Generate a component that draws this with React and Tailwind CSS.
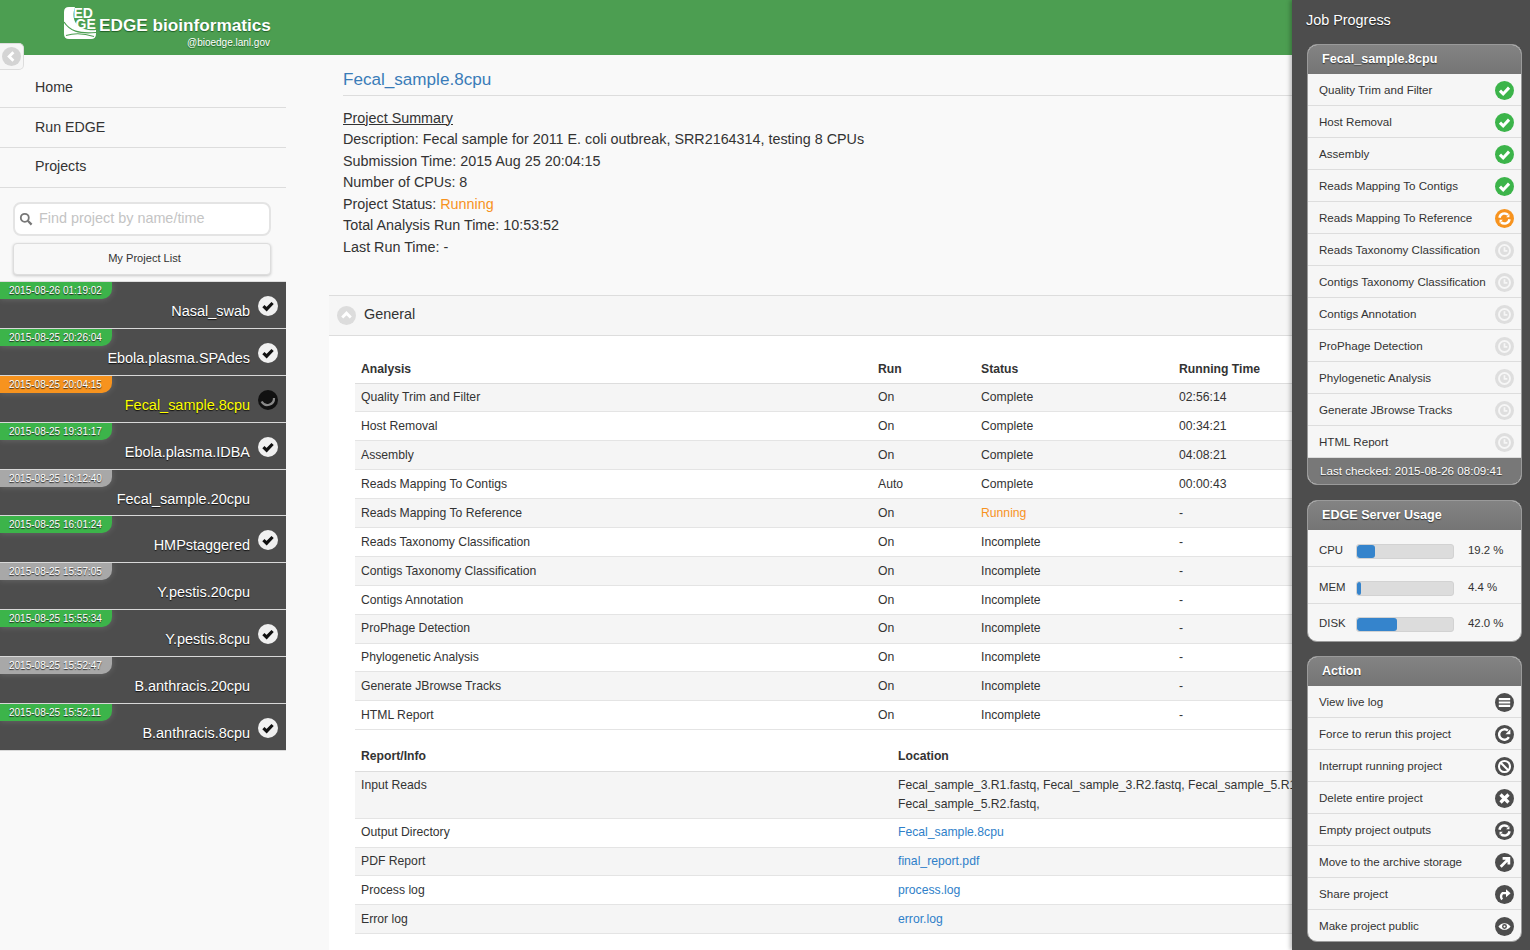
import React from "react";

const F = "[font-family:'Liberation_Sans',Arial,sans-serif]";

const G = {
  check: <path d="M5.2 10.2 8.6 13.6 14.8 7" fill="none" stroke="#fff" strokeWidth="3.2" />,
  refresh: (
    <g fill="none" stroke="#fff" strokeWidth="2.6">
      <path d="M4.7 9.2A5.4 5.4 0 0 1 13.8 6.2" />
      <path d="M15.3 10.8A5.4 5.4 0 0 1 6.2 13.8" />
      <path d="M15.2 5.2V8.6H11.8Z" fill="#fff" strokeWidth="0" />
      <path d="M4.8 14.8V11.4H8.2Z" fill="#fff" strokeWidth="0" />
    </g>
  ),
  clock: (
    <g fill="none" stroke="#f6f6f6" strokeWidth="2">
      <circle cx="10" cy="10" r="5.8" />
      <path d="M10 6.5V10.4H13" strokeWidth="1.8" />
    </g>
  ),
  bars: <path d="M4 6.4H16M4 10H16M4 13.6H16" fill="none" stroke="#fff" strokeWidth="2.3" />,
  rerun: (
    <g fill="none" stroke="#fff" strokeWidth="2.5">
      <path d="M14.6 12.8A5.5 5.5 0 1 1 13.6 6" />
      <path d="M16.2 4.6V9.8H11Z" fill="#fff" strokeWidth="0" />
    </g>
  ),
  forbid: (
    <g fill="none" stroke="#fff" strokeWidth="2.2">
      <circle cx="10" cy="10" r="5.8" />
      <path d="M6 6 14 14" />
    </g>
  ),
  close: <path d="M5.8 5.8 14.2 14.2M14.2 5.8 5.8 14.2" fill="none" stroke="#fff" strokeWidth="3.4" />,
  up: <path d="M6 14.5 13.5 7M8 5.6H14.6V12.2" fill="none" stroke="#fff" strokeWidth="2.9" />,
  forward: (
    <g fill="none" stroke="#fff" strokeWidth="2.5">
      <path d="M7.5 15.2A4.6 4.6 0 0 1 8 8.6H12" />
      <path d="M11.6 4.6 16.4 8.8 11.6 12.8Z" fill="#fff" strokeWidth="0" />
    </g>
  ),
  eye: (
    <g>
      <path d="M3.6 10C7 5.3 13 5.3 16.4 10 13 14.7 7 14.7 3.6 10Z" fill="#fff" />
      <circle cx="10" cy="10" r="2.6" fill="#4d4d4d" />
      <circle cx="10" cy="10" r="1.1" fill="#fff" />
    </g>
  ),
  chevUp: <path d="M5.5 12 10 7.5 14.5 12" fill="none" stroke="#fff" strokeWidth="3" />,
  chevLeft: <path d="M12 5.5 7.5 10 12 14.5" fill="none" stroke="#fff" strokeWidth="3" />,
};

function Badge({ g, color, size = 19, className = "" }) {
  return (
    <svg width={size} height={size} viewBox="0 0 20 20" className={`shrink-0 block ${className}`}>
      <circle cx="10" cy="10" r="10" fill={color} />
      {G[g]}
    </svg>
  );
}

function ListMark({ status }) {
  if (status === "done")
    return (
      <svg width="20" height="20" viewBox="0 0 20 20" className="block">
        <circle cx="10" cy="10" r="10" fill="#f0f0f0" />
        <path d="M5.4 10.2 8.6 13.2 14.6 7" fill="none" stroke="#111" strokeWidth="3.2" />
      </svg>
    );
  if (status === "run")
    return (
      <svg width="20" height="20" viewBox="0 0 20 20" className="block">
        <circle cx="10" cy="10" r="10" fill="#111" />
        <path d="M3.6 11.5A6.6 6.6 0 0 0 16 8" fill="none" stroke="#8a8a8a" strokeWidth="2.2" />
      </svg>
    );
  return null;
}

const projects = [
  ["2015-08-26 01:19:02", "Nasal_swab", "done"],
  ["2015-08-25 20:26:04", "Ebola.plasma.SPAdes", "done"],
  ["2015-08-25 20:04:15", "Fecal_sample.8cpu", "run"],
  ["2015-08-25 19:31:17", "Ebola.plasma.IDBA", "done"],
  ["2015-08-25 16:12:40", "Fecal_sample.20cpu", "idle"],
  ["2015-08-25 16:01:24", "HMPstaggered", "done"],
  ["2015-08-25 15:57:05", "Y.pestis.20cpu", "idle"],
  ["2015-08-25 15:55:34", "Y.pestis.8cpu", "done"],
  ["2015-08-25 15:52:47", "B.anthracis.20cpu", "idle"],
  ["2015-08-25 15:52:11", "B.anthracis.8cpu", "done"],
];

const analysis = [
  ["Quality Trim and Filter", "On", "Complete", "02:56:14"],
  ["Host Removal", "On", "Complete", "00:34:21"],
  ["Assembly", "On", "Complete", "04:08:21"],
  ["Reads Mapping To Contigs", "Auto", "Complete", "00:00:43"],
  ["Reads Mapping To Reference", "On", "Running", "-"],
  ["Reads Taxonomy Classification", "On", "Incomplete", "-"],
  ["Contigs Taxonomy Classification", "On", "Incomplete", "-"],
  ["Contigs Annotation", "On", "Incomplete", "-"],
  ["ProPhage Detection", "On", "Incomplete", "-"],
  ["Phylogenetic Analysis", "On", "Incomplete", "-"],
  ["Generate JBrowse Tracks", "On", "Incomplete", "-"],
  ["HTML Report", "On", "Incomplete", "-"],
];

const progress = [
  ["Quality Trim and Filter", "check", "#3cb44a"],
  ["Host Removal", "check", "#3cb44a"],
  ["Assembly", "check", "#3cb44a"],
  ["Reads Mapping To Contigs", "check", "#3cb44a"],
  ["Reads Mapping To Reference", "refresh", "#f7931e"],
  ["Reads Taxonomy Classification", "clock", "#dedede"],
  ["Contigs Taxonomy Classification", "clock", "#dedede"],
  ["Contigs Annotation", "clock", "#dedede"],
  ["ProPhage Detection", "clock", "#dedede"],
  ["Phylogenetic Analysis", "clock", "#dedede"],
  ["Generate JBrowse Tracks", "clock", "#dedede"],
  ["HTML Report", "clock", "#dedede"],
];

const actions = [
  ["View live log", "bars"],
  ["Force to rerun this project", "rerun"],
  ["Interrupt running project", "forbid"],
  ["Delete entire project", "close"],
  ["Empty project outputs", "refresh"],
  ["Move to the archive storage", "up"],
  ["Share project", "forward"],
  ["Make project public", "eye"],
];

const usage = [
  ["CPU", 19.2, "19.2 %"],
  ["MEM", 4.4, "4.4 %"],
  ["DISK", 42, "42.0 %"],
];

function CardHead({ children }) {
  return (
    <div className="h-[29px] flex items-center pl-[14px] bg-gradient-to-b from-[#838383] to-[#757575] text-white font-bold text-[12.6px] [text-shadow:0_1px_1px_#333] rounded-t-[9px]">
      {children}
    </div>
  );
}

function Row({ label, g, color }) {
  return (
    <div className="h-[32px] flex items-center justify-between pl-[11px] pr-[7px] border-b border-[#dddddd] text-[11.6px] text-[#333] last:h-[31px] last:border-b-0">
      <span className="whitespace-nowrap">{label}</span>
      <Badge g={g} color={color} className="mt-[2px]" />
    </div>
  );
}

function Td({ children, className = "" }) {
  return <td className={`px-[6px] align-middle ${className}`}>{children}</td>;
}

export default function App() {
  return (
    <div className={`relative h-[950px] w-full overflow-hidden bg-white ${F} text-[#333]`}>
      <header className="h-[55px] bg-[#4c9e51] relative pl-[64px]">
        <div className="flex items-start pt-[7px]">
          <svg width="32" height="32" viewBox="0 0 32 32" className="shrink-0 overflow-visible">
            <path d="M5 0H11C8 8 9 18 20 22 25 23.5 29 23.5 32 23V27Q32 32 27 32H5Q0 32 0 27V5Q0 0 5 0Z" fill="#fff" />
            <path d="M0 15C6 24 14 27 32 25.5" fill="none" stroke="#4c9e51" strokeWidth="1.2" />
            <path d="M2 28.5C12 25.5 22 27 30 29.5" fill="none" stroke="#4c9e51" strokeWidth="1.1" />
            <text x="9.5" y="11" fontSize="14" fontWeight="700" fill="#fff" fontFamily="'Liberation Sans',sans-serif">ED</text>
            <text x="11.5" y="21.5" fontSize="14" fontWeight="700" fill="#fff" fontFamily="'Liberation Sans',sans-serif">GE</text>
          </svg>
          <div className="ml-[3px] w-[172px]">
            <div className="text-[17.2px] leading-[22px] mt-[7px] font-bold text-white whitespace-nowrap [text-shadow:0_1px_1px_#1f5f25]">EDGE bioinformatics</div>
            <div className="text-[10px] leading-[12px] mt-[1px] text-white text-right whitespace-nowrap pr-[1px] [text-shadow:0_1px_1px_#1f5f25]">@bioedge.lanl.gov</div>
          </div>
        </div>
      </header>

      <div className="absolute left-0 top-[43px] z-10 h-[27px] w-[24px] bg-[#f6f6f6] border border-l-0 border-[#dddddd] rounded-r-[5px] flex items-center justify-center">
        <Badge g="chevLeft" color="#d4d4d4" />
      </div>

      <div className="flex h-[895px]">
        <aside className="w-[329px] shrink-0 bg-[#f9f9f9]">
          <div className="w-[286px]">
            <nav className="pt-[13px] text-[14.2px] text-[#333]">
              {["Home", "Run EDGE", "Projects"].map((t) => (
                <div key={t} className="h-[40px] flex items-center pl-[35px] border-b border-[#dddddd] last:pb-[2px]">{t}</div>
              ))}
            </nav>
            <div className="mx-[13px] mt-[14px] h-[34px] w-[258px] rounded-[8px] border-2 border-[#e4e4e4] bg-white flex items-center pl-[4px]">
              <svg width="14" height="14" viewBox="0 0 14 14" className="shrink-0">
                <circle cx="5.8" cy="5.8" r="4" fill="none" stroke="#777" strokeWidth="1.8" />
                <path d="M8.8 8.8 12.6 12.6" stroke="#777" strokeWidth="2.2" />
              </svg>
              <span className="ml-[6px] text-[14.4px] text-[#c4c4c4] whitespace-nowrap">Find project by name/time</span>
            </div>
            <div className="mx-[13px] mt-[7px] h-[32px] w-[258px] rounded-[4px] border border-[#dddddd] bg-[#f8f8f8] shadow-[0_1px_3px_rgba(0,0,0,0.2)] flex items-center justify-center pb-[2px] pl-[5px] text-[11.1px] text-[#333]">
              My Project List
            </div>
            <div className="mt-[6px] border-t border-[#dddddd]">
              {projects.map(([date, name, status]) => (
                <div key={name} className="relative h-[46.9px] bg-[#4d4d4d] border-b border-[#d8d8d8] overflow-hidden">
                  <div
                    className={`h-[17px] w-[112px] rounded-br-[10px] pl-[9px] flex items-center text-[10px] text-white [text-shadow:0_1px_1px_#222] shadow-[0_0_7px_rgba(255,255,255,0.18)] whitespace-nowrap ${
                      status === "done" ? "bg-[#3cb44a]" : status === "run" ? "bg-[#f7931e]" : "bg-[#a8a8a8]"
                    }`}
                  >
                    {date}
                  </div>
                  <div className="absolute right-[36px] top-[20px] text-[14.45px] leading-[18px] whitespace-nowrap [text-shadow:0_1px_1px_#111]">
                    <span className={status === "run" ? "text-[#ffff00]" : "text-white"}>{name}</span>
                  </div>
                  <div className="absolute left-[258px] top-[14px]">
                    <ListMark status={status} />
                  </div>
                </div>
              ))}
            </div>
          </div>
        </aside>

        <main className="flex-1 min-w-0 overflow-hidden">
          <section className="bg-[#f9f9f9] h-[240px] pl-[14px]">
            <h1 className="text-[17.1px] leading-[22px] pt-[14px] pb-[4px] text-[#3a7cb8] border-b border-[#dddddd]">Fecal_sample.8cpu</h1>
            <div className="text-[14.35px] leading-[21.6px] mt-[11.5px] text-[#333] whitespace-nowrap">
              <div className="underline">Project Summary</div>
              <div>Description: Fecal sample for 2011 E. coli outbreak, SRR2164314, testing 8 CPUs</div>
              <div>Submission Time: 2015 Aug 25 20:04:15</div>
              <div>Number of CPUs: 8</div>
              <div>Project Status: <span className="text-[#f7931e]">Running</span></div>
              <div>Total Analysis Run Time: 10:53:52</div>
              <div>Last Run Time: -</div>
            </div>
          </section>

          <div className="h-[41px] bg-[#f6f6f6] border-y border-[#dddddd] flex items-center pl-[8px] text-[14.4px]">
            <Badge g="chevUp" color="#dcdcdc" />
            <span className="ml-[8px] mb-[2px]">General</span>
          </div>

          <div className="pl-[26px] pt-[19px] w-[1180px] text-[12.2px] text-[#333]">
            <table className="w-full table-fixed border-collapse">
              <colgroup>
                <col className="w-[517px]" />
                <col className="w-[103px]" />
                <col className="w-[198px]" />
                <col />
              </colgroup>
              <thead>
                <tr className="h-[28px] border-b border-[#dddddd] font-bold">
                  <Td>Analysis</Td><Td>Run</Td><Td>Status</Td><Td>Running Time</Td>
                </tr>
              </thead>
              <tbody>
                {analysis.map((r, i) => (
                  <tr key={r[0]} className={`h-[28.9px] border-b border-[#e4e4e4] ${i % 2 === 0 ? "bg-[#f5f5f5]" : "bg-white"}`}>
                    <Td>{r[0]}</Td>
                    <Td>{r[1]}</Td>
                    <Td className={r[2] === "Running" ? "text-[#f7931e]" : ""}>{r[2]}</Td>
                    <Td>{r[3]}</Td>
                  </tr>
                ))}
              </tbody>
            </table>

            <table className="w-full table-fixed border-collapse mt-[11px]">
              <colgroup>
                <col className="w-[537px]" />
                <col />
              </colgroup>
              <thead>
                <tr className="h-[30px] border-b border-[#dddddd] font-bold">
                  <Td>Report/Info</Td><Td>Location</Td>
                </tr>
              </thead>
              <tbody>
                <tr className="h-[47px] bg-[#f5f5f5] border-b border-[#e4e4e4]">
                  <td className="px-[6px] pt-[4px] align-top">Input Reads</td>
                  <td className="px-[6px] pt-[4px] align-top leading-[19px] whitespace-nowrap">
                    Fecal_sample_3.R1.fastq, Fecal_sample_3.R2.fastq, Fecal_sample_5.R1.fastq,<br />Fecal_sample_5.R2.fastq,
                  </td>
                </tr>
                {[
                  ["Output Directory", "Fecal_sample.8cpu"],
                  ["PDF Report", "final_report.pdf"],
                  ["Process log", "process.log"],
                  ["Error log", "error.log"],
                ].map(([a, b], i) => (
                  <tr key={a} className={`h-[28.9px] border-b border-[#e4e4e4] ${i % 2 === 1 ? "bg-[#f5f5f5]" : "bg-white"}`}>
                    <Td>{a}</Td>
                    <Td className="text-[#2f7fc9]">{b}</Td>
                  </tr>
                ))}
              </tbody>
            </table>
          </div>
        </main>
      </div>

      <aside className="absolute right-0 top-0 h-[950px] w-[238px] bg-[#4d4d4d] shadow-[-2px_0_4px_rgba(0,0,0,0.25)] pl-[15px] pr-[8px] z-20">
        <div className="h-[44px] pt-[11px] -ml-[1px] text-[14.4px] leading-[18px] text-white [text-shadow:0_1px_1px_#222]">Job Progress</div>
        <div className="rounded-[10px] border border-[#9a9a9a] bg-[#f6f6f6]">
          <CardHead>Fecal_sample.8cpu</CardHead>
          <div>{progress.map(([l, g, c]) => <div key={l} className="h-[32px] flex items-center justify-between pl-[11px] pr-[7px] border-b border-[#dddddd] text-[11.6px] text-[#333]"><span className="whitespace-nowrap">{l}</span><Badge g={g} color={c} className="mt-[2px]" /></div>)}</div>
          <div className="h-[26px] flex items-center pl-[12px] bg-[#787878] text-white text-[11.6px] rounded-b-[9px] [text-shadow:0_1px_1px_#333] whitespace-nowrap">
            Last checked: 2015-08-26 08:09:41
          </div>
        </div>
        <div className="mt-[15px] rounded-[10px] border border-[#9a9a9a] bg-[#f6f6f6]">
          <CardHead>EDGE Server Usage</CardHead>
          <div>
            {usage.map(([l, v, t]) => (
              <div key={l} className="h-[37px] flex items-center pl-[11px] pt-[6px] last:pt-[3px] border-b border-[#dddddd] last:border-b-0 text-[11.4px]">
                <span className="w-[37px] shrink-0">{l}</span>
                <div className="h-[15px] w-[98px] shrink-0 rounded-[3px] bg-[#dcdcdc] border border-[#d2d2d2] overflow-hidden">
                  <div className="h-full bg-[#3584cc] rounded-[3px]" style={{ width: `${v}%` }} />
                </div>
                <span className="ml-[14px]">{t}</span>
              </div>
            ))}
          </div>
        </div>
        <div className="mt-[14px] rounded-[10px] border border-[#9a9a9a] bg-[#f6f6f6]">
          <CardHead>Action</CardHead>
          <div>{actions.map(([l, g]) => <Row key={l} label={l} g={g} color="#4d4d4d" />)}</div>
        </div>
      </aside>
    </div>
  );
}
